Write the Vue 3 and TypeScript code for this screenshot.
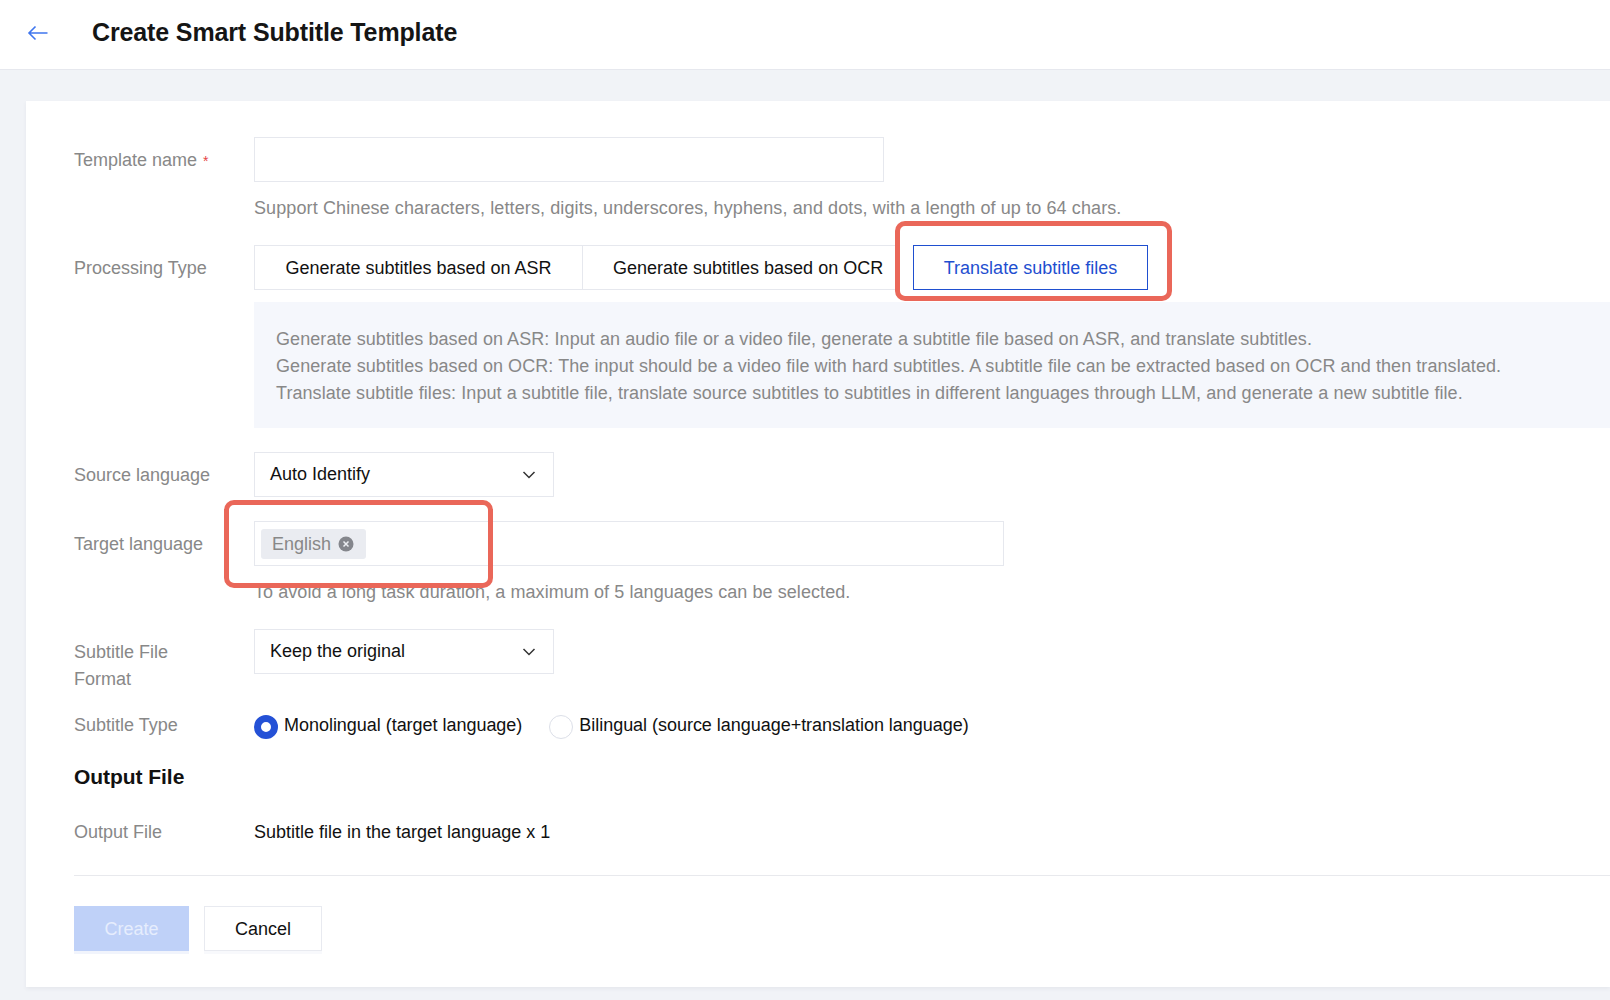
<script setup lang="ts">
import { ref } from 'vue'

const processingTypes = [
  'Generate subtitles based on ASR',
  'Generate subtitles based on OCR',
  'Translate subtitle files',
]
const activeType = ref(2)
const subtitleType = ref(0)
const noteLines = [
  'Generate subtitles based on ASR: Input an audio file or a video file, generate a subtitle file based on ASR, and translate subtitles.',
  'Generate subtitles based on OCR: The input should be a video file with hard subtitles. A subtitle file can be extracted based on OCR and then translated.',
  'Translate subtitle files: Input a subtitle file, translate source subtitles to subtitles in different languages through LLM, and generate a new subtitle file.',
]
</script>

<template>
  <div class="page">
    <header class="top">
      <svg class="back" width="22" height="16" viewBox="0 0 22 16" fill="none">
        <path d="M20.5 8H2M8.5 1.5L2 8l6.5 6.5" stroke="#3f76ee" stroke-width="1.6" />
      </svg>
      <h1>Create Smart Subtitle Template</h1>
    </header>

    <main class="card">
      <div class="row">
        <label class="label">Template name <span class="req">*</span></label>
        <div class="field">
          <input class="name-input" type="text" />
          <p class="help first-help">Support Chinese characters, letters, digits, underscores, hyphens, and dots, with a length of up to 64 chars.</p>
        </div>
      </div>

      <div class="row gap-seg">
        <label class="label">Processing Type</label>
        <div class="field">
          <div class="segments">
            <button
              v-for="(t, i) in processingTypes"
              :key="t"
              :class="['seg', 'seg' + i, { active: i === activeType }]"
              @click="activeType = i"
            >{{ t }}</button>
            <span class="mark mark-seg"></span>
          </div>
          <div class="note">
            <div v-for="l in noteLines" :key="l">{{ l }}</div>
          </div>
        </div>
      </div>

      <div class="row gap">
        <label class="label">Source language</label>
        <div class="field">
          <div class="select">
            <span>Auto Identify</span>
            <svg width="14" height="8" viewBox="0 0 14 8" fill="none"><path d="M1.5 1l5.5 5.5L12.5 1" stroke="#333" stroke-width="1.5" /></svg>
          </div>
        </div>
      </div>

      <div class="row gap">
        <label class="label">Target language</label>
        <div class="field">
          <div class="multi">
            <span class="tag">
              <span class="tag-text">English</span>
              <svg width="16" height="16" viewBox="0 0 16 16"><circle cx="8" cy="8" r="7.5" fill="#84868c" /><path d="M5.5 5.5l5 5M10.5 5.5l-5 5" stroke="#eceef2" stroke-width="1.5" /></svg>
            </span>
            <span class="mark mark-lang"></span>
          </div>
          <p class="help">To avoid a long task duration, a maximum of 5 languages can be selected.</p>
        </div>
      </div>

      <div class="row gap-format">
        <label class="label narrow">Subtitle File Format</label>
        <div class="field">
          <div class="select">
            <span>Keep the original</span>
            <svg width="14" height="8" viewBox="0 0 14 8" fill="none"><path d="M1.5 1l5.5 5.5L12.5 1" stroke="#333" stroke-width="1.5" /></svg>
          </div>
        </div>
      </div>

      <div class="row radio-row">
        <label class="label plain">Subtitle Type</label>
        <div class="field radios">
          <div class="radio-item" @click="subtitleType = 0">
            <span :class="['radio', { on: subtitleType === 0 }]"></span>
            Monolingual (target language)
          </div>
          <div class="radio-item" @click="subtitleType = 1">
            <span :class="['radio', { on: subtitleType === 1 }]"></span>
            Bilingual (source language+translation language)
          </div>
        </div>
      </div>

      <h2>Output File</h2>

      <div class="row output">
        <label class="label plain">Output File</label>
        <div class="field value">Subtitle file in the target language x 1</div>
      </div>

      <div class="actions">
        <button class="btn primary" disabled>Create</button>
        <button class="btn">Cancel</button>
      </div>
    </main>
  </div>
</template>

<style>
html, body {
  background: #f1f3f7;
}
</style>

<style scoped>
.page {
  font-family: "Liberation Sans", Arial, sans-serif;
  font-size: 18px;
  line-height: 27px;
  color: #111;
  min-height: 1000px;
  background: #f1f3f7;
}
.top {
  height: 70px;
  box-sizing: border-box;
  background: #fff;
  border-bottom: 1px solid #e6e8ee;
  display: flex;
  align-items: center;
  padding: 0 0 4px 27px;
}
.back {
  margin-right: 43px;
}
h1 {
  margin: 0;
  font-size: 25px;
  font-weight: 700;
  letter-spacing: -0.13px;
  color: #151515;
}
.card {
  margin: 31px 0 0 26px;
  height: 886px;
  box-sizing: border-box;
  padding: 36px 0 0 48px;
  background: #fff;
  box-shadow: 0 2px 4px rgba(54, 58, 80, 0.06);
}
.row {
  display: flex;
}
.gap {
  margin-top: 24px;
}
.gap-seg {
  margin-top: 23px;
}
.gap-format {
  margin-top: 23px;
}
.label {
  flex: none;
  width: 180px;
  padding-top: 10px;
  color: #888;
}
.label.narrow {
  width: 180px;
  padding-right: 60px;
  box-sizing: border-box;
}
.label.plain {
  padding-top: 0;
}
.req {
  color: #e54545;
  font-size: 14px;
  margin-left: 1px;
}
.field {
  flex: 1;
  min-width: 0;
}
.name-input {
  display: block;
  width: 630px;
  height: 45px;
  box-sizing: border-box;
  border: 1px solid #e6e8ee;
  outline: none;
}
.help {
  margin: 13px 0 0;
  color: #888;
  letter-spacing: 0.07px;
}
.first-help {
  letter-spacing: 0.11px;
}
.segments {
  position: relative;
  display: flex;
}
.seg {
  height: 45px;
  box-sizing: border-box;
  font: inherit;
  color: #111;
  background: #fff;
  border: 1px solid #e6e8ee;
  padding: 2px 0 0;
  white-space: nowrap;
}
.seg0 {
  width: 329px;
}
.seg1 {
  width: 314px;
  margin-left: -1px;
  border-right: 0;
  text-align: left;
  padding-left: 30px;
}
.seg2 {
  width: 235px;
  margin-left: 17px;
}
.seg.active {
  color: #1f4fd0;
  border-color: #1f4fd0;
}
.mark {
  position: absolute;
  box-sizing: border-box;
  border: 5px solid #ea6759;
  border-radius: 10px;
  pointer-events: none;
}
.mark-seg {
  left: 641px;
  top: -24px;
  width: 277px;
  height: 80px;
}
.mark-lang {
  left: -31px;
  top: -22px;
  width: 269px;
  height: 88px;
}
.note {
  margin-top: 12px;
  height: 126px;
  box-sizing: border-box;
  padding: 24px 0 0 22px;
  background: #f5f7fc;
  color: #888;
  letter-spacing: 0.07px;
  white-space: nowrap;
  overflow: hidden;
}
.select {
  width: 300px;
  height: 45px;
  box-sizing: border-box;
  border: 1px solid #e6e8ee;
  display: flex;
  align-items: center;
  justify-content: space-between;
  padding: 0 17px 0 15px;
}
.multi {
  position: relative;
  width: 750px;
  height: 45px;
  box-sizing: border-box;
  border: 1px solid #e6e8ee;
  display: flex;
  align-items: center;
  padding-left: 6px;
}
.tag {
  display: inline-flex;
  align-items: center;
  gap: 7px;
  height: 30px;
  padding: 0 12px 0 11px;
  border-radius: 3px;
  background: #eaecf1;
  color: #888;
}
.tag-text {
  padding-top: 2px;
}
.radio-row {
  margin-top: 19px;
}
.radios {
  display: flex;
  gap: 27px;
  letter-spacing: -0.03px;
}
.radio-item {
  display: flex;
  gap: 6px;
  align-items: flex-start;
}
.radio {
  width: 24px;
  height: 24px;
  margin-top: 3px;
  box-sizing: border-box;
  border: 1px solid #dcdfe8;
  border-radius: 50%;
}
.radio.on {
  border: 7px solid #2451d6;
}
h2 {
  margin: 23px 0 0;
  font-size: 21px;
  line-height: 30px;
  font-weight: 700;
  letter-spacing: -0.05px;
  color: #111;
}
.output {
  margin-top: 27px;
}
.actions {
  margin-top: 29px;
  padding-top: 30px;
  border-top: 1px solid #e8e9ed;
  display: flex;
  gap: 15px;
}
.btn {
  width: 118px;
  height: 45px;
  box-sizing: border-box;
  font: inherit;
  color: #111;
  background: #fff;
  border: 1px solid #e8eaf0;
  box-shadow: 0 3px 0 #f8f9fc;
  padding: 2px 0 0;
}
.btn.primary {
  width: 115px;
  background: #bfd1f8;
  border-color: #bfd1f8;
  color: #e6edfd;
  box-shadow: 0 3px 0 #f1f4fc;
}
</style>
